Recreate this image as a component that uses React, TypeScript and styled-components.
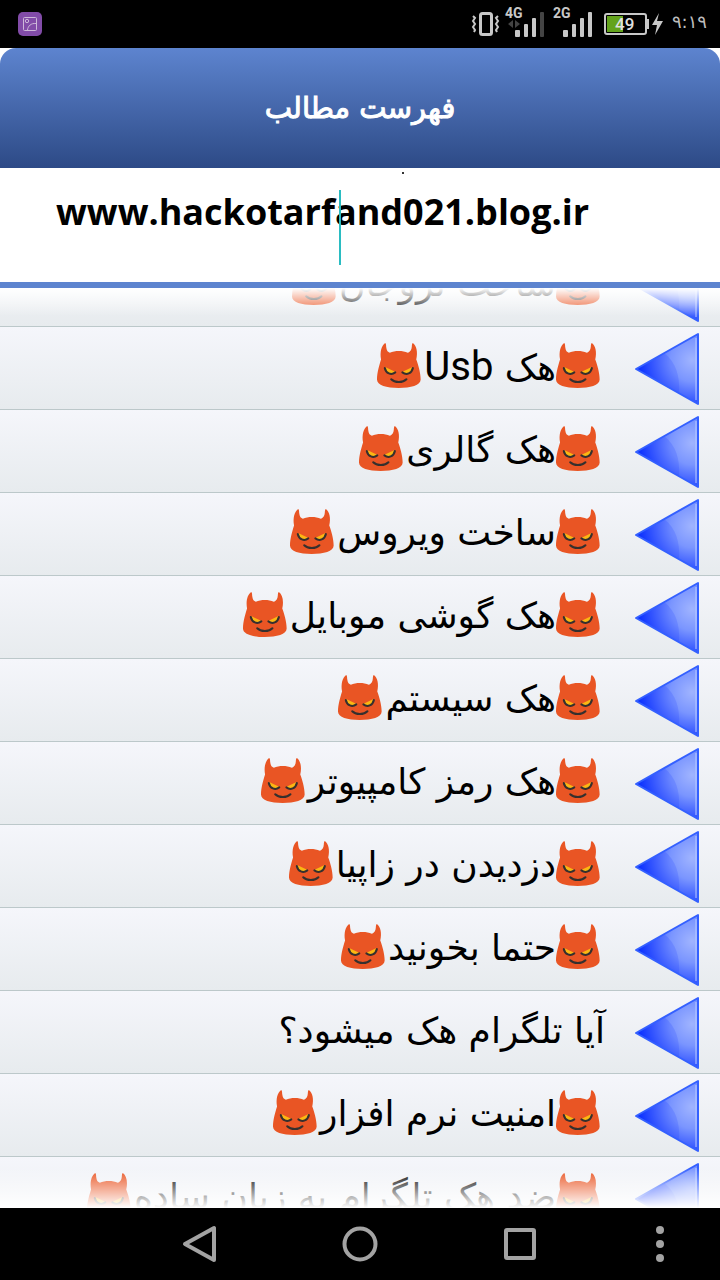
import React from "react";
import styled, { createGlobalStyle } from "styled-components";

const GlobalStyle = createGlobalStyle`
  * { box-sizing: border-box; }
  body { margin: 0; background: #fff; font-family: "DejaVu Sans", "Noto Sans", sans-serif; }
`;

const Page = styled.div`
  display: flex;
  flex-direction: column;
  height: 100vh;
  overflow: hidden;
`;

const StatusBar = styled.div`
  display: flex;
  flex: none;
  align-items: center;
  justify-content: space-between;
  height: 48px;
  padding: 0 13px 0 18px;
  background: #000;
`;

const StatusGroup = styled.div`
  display: flex;
  align-items: center;
`;

const StatusIcons = styled.svg`
  display: block;
  flex: none;
`;

const Clock = styled.time`
  width: 36px;
  margin-left: 8px;
  padding-bottom: 4px;
  color: #bdbdbd;
  font-size: 18px;
  line-height: 40px;
  text-align: right;
  white-space: nowrap;
`;

const Header = styled.header`
  display: flex;
  flex: none;
  align-items: center;
  justify-content: center;
  height: 120px;
  border-radius: 16px 16px 0 0;
  background: linear-gradient(#5d84cf, #2d4a86);
`;

const Title = styled.h1`
  margin: 0;
  color: #fff;
  font-size: 29px;
  font-weight: 400;
  line-height: 40px;
  -webkit-text-stroke: 1px #fff;
`;

const SearchPanel = styled.div`
  position: relative;
  flex: none;
  height: 120px;
  padding: 20px 56px;
  border-bottom: 6px solid #5d84cf;
  background: #fff;
`;

const SearchInput = styled.input`
  display: block;
  width: 100%;
  height: 46px;
  padding: 0;
  border: 0;
  outline: 0;
  background: transparent;
  color: #000;
  font-family: "Comic Sans MS", "Open Sans", sans-serif;
  font-size: 36px;
  font-weight: 700;
`;

const Caret = styled.span`
  position: absolute;
  top: 22px;
  left: calc(50% - 21px);
  width: 2px;
  height: 75px;
  background: #2abcc2;
`;

const Speck = styled.span`
  position: absolute;
  top: 4px;
  left: calc(50% + 42px);
  width: 2px;
  height: 2px;
  background: #333;
`;

const ListView = styled.main`
  position: relative;
  flex: 1;
  min-height: 0;
  overflow: hidden;

  &::before,
  &::after {
    content: "";
    position: absolute;
    z-index: 1;
    right: 0;
    left: 0;
    pointer-events: none;
  }
  &::before {
    top: 0;
    height: 28px;
    background: linear-gradient(#fff, rgba(255, 255, 255, 0));
  }
  &::after {
    bottom: 0;
    height: 40px;
    background: linear-gradient(rgba(255, 255, 255, 0), #fff);
  }
`;

const Rows = styled.ul`
  margin: -44px 0 0;
  padding: 0;
  list-style: none;
`;

const Row = styled.button`
  display: flex;
  align-items: center;
  width: 100%;
  height: 83px;
  padding: 2px 20px 0;
  border: 0;
  border-bottom: 1px solid #bcc8ca;
  background: linear-gradient(#f5f6fb, #e7ebee);
  color: #000;
  text-align: right;
`;

const Label = styled.span`
  display: flex;
  align-items: center;
  height: 74px;
  margin-right: 29px;
  white-space: nowrap;
`;

const Words = styled.span`
  padding-bottom: 4px;
  font-family: "DejaVu Sans", sans-serif;
  font-size: 36px;
  line-height: 48px;
`;

const Latin = styled.bdi`
  font-family: Roboto, sans-serif;
  font-size: 40px;
`;

const EmojiArt = styled.svg<{ $lead?: boolean }>`
  flex: none;
  width: 44px;
  height: 45px;
  margin: ${(p) => (p.$lead ? "0 5px 8px 0" : "0 3px 8px 0")};
`;

const ArrowArt = styled.svg`
  display: block;
  flex: none;
  width: 66px;
  height: 74px;
`;

const NavBar = styled.nav`
  display: flex;
  flex: none;
  align-items: center;
  justify-content: flex-end;
  height: 72px;
  padding-right: 36px;
  background: #000;
`;

const NavKeys = styled.div`
  display: flex;
  flex: 1;
  justify-content: flex-end;
  margin-right: 36px;
`;

const Key = styled.button<{ $narrow?: boolean }>`
  display: flex;
  justify-content: center;
  width: ${(p) => (p.$narrow ? "48px" : "160px")};
  padding: 0;
  border: 0;
  background: none;
`;

function Devil({ lead }: { lead?: boolean }) {
  return (
    <EmojiArt $lead={lead} viewBox="0 0 130 133" aria-hidden="true">
      <path
        d="M24 0C13 8 8 27 12 49C8 62 0 87 0 108C0 125 28 133 64 133S129 125 129 108C129 87 121 62 116 49C121 27 117 8 106 0C102 2 104 9 102 16C100 24 96 26 91 29C76 22 53 22 38 29C32 26 29 23 28 16C26 9 28 2 24 0Z"
        fill="#e95524"
      />
      <path d="M24 71L55 86C47 94 27 92 24 71ZM105 71L74 86C82 94 102 92 105 71Z" fill="#fbb713" />
      <g fill="none" stroke="#35302e" strokeWidth="6" strokeLinecap="round">
        <path d="M23 74C26 90 42 96 54 87" />
        <path d="M106 74C103 90 87 96 75 87" />
        <path d="M42 107C52 118 77 118 87 107" />
      </g>
    </EmojiArt>
  );
}

function Arrow() {
  return (
    <ArrowArt viewBox="0 0 66 74" aria-hidden="true">
      <path d="M2 37L64 2V72Z" fill="url(#arrowFill)" />
      <path d="M2 37L30 21C42 30 46 44 45 61Z" fill="#0d31ff" opacity="0.15" />
      <path d="M2 37L64 2V72Z" fill="none" stroke="#3460ff" strokeWidth="2" strokeLinejoin="round" />
      <path d="M62 6V68" stroke="#b9cbff" strokeWidth="1" />
    </ArrowArt>
  );
}

function ArrowDefs() {
  return (
    <svg width="0" height="0" style={{ position: "absolute" }} aria-hidden="true">
      <defs>
        <radialGradient id="arrowFill" gradientUnits="userSpaceOnUse" cx="58" cy="28" r="54">
          <stop offset="0" stopColor="#a0b4ff" />
          <stop offset="0.4" stopColor="#7a95ff" />
          <stop offset="1" stopColor="#0a30ff" />
        </radialGradient>
      </defs>
    </svg>
  );
}

type Topic = { text: string; latin?: string; plain?: boolean };

const topics: Topic[] = [
  { text: "ساخت تروجان" },
  { text: "هک ", latin: "Usb" },
  { text: "هک گالری" },
  { text: "ساخت ویروس" },
  { text: "هک گوشی موبایل" },
  { text: "هک سیستم" },
  { text: "هک رمز کامپیوتر" },
  { text: "دزدیدن در زاپیا" },
  { text: "حتما بخونید" },
  { text: "آیا تلگرام هک میشود؟", plain: true },
  { text: "امنیت نرم افزار" },
  { text: "ضد هک تلگرام به زبان ساده" },
];

export default function App() {
  return (
    <Page>
      <GlobalStyle />
      <ArrowDefs />
      <StatusBar>
        <StatusIcons width="24" height="24" viewBox="0 0 24 24" aria-hidden="true">
          <rect width="24" height="24" rx="5" fill="#824ca8" />
          <g fill="none" stroke="#cdb8d9" strokeWidth="1">
            <rect x="5.5" y="5.5" width="13" height="13" rx="1" />
            <circle cx="9" cy="9" r="1.7" />
            <path d="M9.5 18C10 14 13 11 18 11.5" />
          </g>
        </StatusIcons>
        <StatusGroup>
          <StatusIcons width="192" height="48" viewBox="471 0 192 48" aria-label="Signal and battery">
            <g fill="none" stroke="#c8c8c8">
              <rect x="480.5" y="13.5" width="11" height="21" rx="2" strokeWidth="3" />
              <path
                d="M473 16l2 2-2 3 2 3-2 3 2 3-1 2M498 16l-2 2 2 3-2 3 2 3-2 3 1 2"
                strokeWidth="2"
              />
            </g>
            <g fill="#c8c8c8" fontFamily="Roboto, sans-serif" fontWeight="700" fontSize="14">
              <text x="505" y="18">4G</text>
              <text x="553" y="18">2G</text>
            </g>
            <path d="M513 20v8l-5-4zM515 20v8l5-4z" fill="#444" />
            <g fill="#c8c8c8">
              <rect x="515" y="30" width="5" height="7" rx="1" />
              <rect x="524" y="24" width="4" height="13" rx="1" />
              <rect x="532" y="18" width="4" height="19" rx="1" />
              <rect x="540" y="12" width="4" height="25" rx="1" fill="#444" />
              <rect x="563" y="30" width="5" height="7" rx="1" />
              <rect x="572" y="24" width="4" height="13" rx="1" />
              <rect x="580" y="18" width="4" height="19" rx="1" />
              <rect x="588" y="12" width="4" height="25" rx="1" />
              <rect x="647" y="19" width="2" height="10" />
              <path d="M659 13L652 25H657L655 35L663 21H657Z" />
            </g>
            <rect x="605" y="14" width="41" height="20" rx="2" fill="none" stroke="#c8c8c8" strokeWidth="2" />
            <rect x="607" y="16" width="16" height="16" fill="#63a31c" />
            <text x="615" y="30" fill="#e0e0e0" fontFamily="Roboto, sans-serif" fontWeight="500" fontSize="17">
              49
            </text>
          </StatusIcons>
          <Clock>۹:۱۹</Clock>
        </StatusGroup>
      </StatusBar>
      <Header>
        <Title dir="rtl">فهرست مطالب</Title>
      </Header>
      <SearchPanel>
        <SearchInput aria-label="جستجو" defaultValue="www.hackotarfand021.blog.ir" />
        <Caret />
        <Speck />
      </SearchPanel>
      <ListView>
        <Rows dir="rtl">
          {topics.map((t) => (
            <li key={t.text}>
              <Row type="button">
                <Arrow />
                <Label>
                  {!t.plain && <Devil lead />}
                  <Words>
                    {t.text}
                    {t.latin && <Latin>{t.latin}</Latin>}
                  </Words>
                  {!t.plain && <Devil />}
                </Label>
              </Row>
            </li>
          ))}
        </Rows>
      </ListView>
      <NavBar>
        <NavKeys>
          <Key type="button" aria-label="Back">
            <svg width="36" height="40" viewBox="0 0 36 40">
              <path d="M32 4V36L3 20Z" fill="none" stroke="#a3a3a3" strokeWidth="4" strokeLinejoin="round" />
            </svg>
          </Key>
          <Key type="button" aria-label="Home">
            <svg width="36" height="40" viewBox="0 0 36 40">
              <circle cx="18" cy="20" r="15.5" fill="none" stroke="#a3a3a3" strokeWidth="4" />
            </svg>
          </Key>
          <Key type="button" aria-label="Recent apps">
            <svg width="36" height="40" viewBox="0 0 36 40">
              <rect x="4" y="6" width="28" height="28" rx="1" fill="none" stroke="#a3a3a3" strokeWidth="4" />
            </svg>
          </Key>
        </NavKeys>
        <Key type="button" $narrow aria-label="More">
          <svg width="10" height="40" viewBox="0 0 10 40" fill="#a3a3a3">
            <circle cx="5" cy="6" r="4" />
            <circle cx="5" cy="20" r="4" />
            <circle cx="5" cy="34" r="4" />
          </svg>
        </Key>
      </NavBar>
    </Page>
  );
}
